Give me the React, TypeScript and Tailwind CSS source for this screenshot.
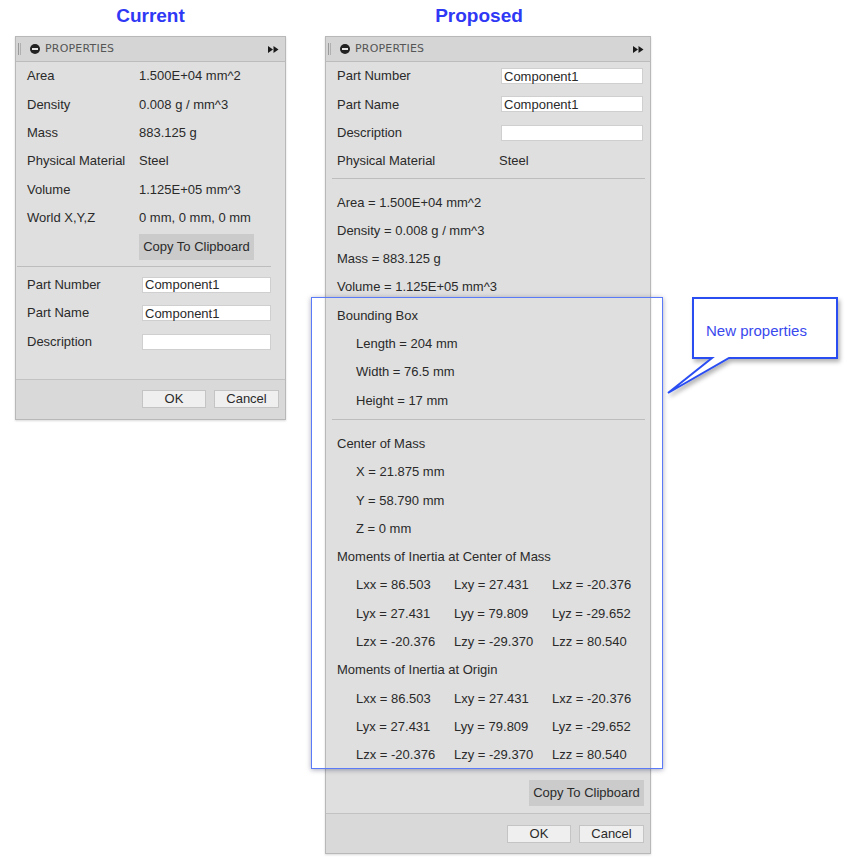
import React from "react";

const FONT = { fontFamily: '"Liberation Sans", Arial, sans-serif' };

const Header: React.FC = () => (
    <div className="flex h-[25px] items-center border-b border-[#bcbcbc] bg-[#d5d5d5] pl-[2px] pr-[6px]">
        <div className="flex h-[12px] gap-[1px]">
            <div className="w-[1px] bg-[#9a9a9a]" />
            <div className="w-[1px] bg-[#b0b0b0]" />
        </div>
        <div className="ml-[9px] flex h-[10px] w-[10px] items-center justify-center rounded-full bg-[#222]">
            <div className="h-[2px] w-[6px] bg-[#e6e6e6]" />
        </div>
        <div
            className="ml-[5px] flex-1 text-[11px] tracking-[0.2px] text-[#555]"
            style={{ fontFamily: '"DejaVu Sans", sans-serif' }}
        >
            PROPERTIES
        </div>
        <svg width="11" height="7" viewBox="0 0 11 7">
            <path d="M0 0 L5 3.5 L0 7 Z M5.5 0 L10.5 3.5 L5.5 7 Z" fill="#1a1a1a" />
        </svg>
    </div>
);

const Row: React.FC<{ label?: string; children?: React.ReactNode; labelW: number }> = ({
    label,
    children,
    labelW
}) => (
    <div className="flex h-[28.3px] items-center">
        <div style={{ width: labelW }} className="shrink-0">
            {label}
        </div>
        <div className="flex-1">{children}</div>
    </div>
);

const Field: React.FC<{ value?: string; w: number }> = ({ value, w }) => (
    <div
        style={{ width: w }}
        className="flex h-[16px] items-center border border-[#cfcfcf] bg-white pl-[2px] text-[13px] leading-none"
    >
        {value}
    </div>
);

const Footer: React.FC = () => (
    <div className="flex h-[40px] items-center justify-end gap-[8px] border-t border-[#c2c2c2] bg-[#d9d9d9] pr-[6px]">
        <div className="flex h-[18px] w-[64px] items-center justify-center border border-[#c4c4c4] bg-[#efefef] text-[13px]">
            OK
        </div>
        <div className="flex h-[18px] w-[65px] items-center justify-center border border-[#c4c4c4] bg-[#efefef] text-[13px]">
            Cancel
        </div>
    </div>
);

const ClipboardButton: React.FC = () => (
    <div className="flex h-[26px] w-[115px] items-center justify-center bg-[#cbcbcb] text-[13px]">
        Copy To Clipboard
    </div>
);

const CurrentPanel: React.FC = () => (
    <div className="border border-[#b8b8b8] bg-[#dfdfdf] text-[13px] text-[#2a2a2a] shadow-[0_1px_2px_rgba(0,0,0,0.15)]">
        <Header />
        <div className="pl-[11px]">
            <Row label="Area" labelW={112}>1.500E+04 mm^2</Row>
            <Row label="Density" labelW={112}>0.008 g / mm^3</Row>
            <Row label="Mass" labelW={112}>883.125 g</Row>
            <Row label="Physical Material" labelW={112}>Steel</Row>
            <Row label="Volume" labelW={112}>1.125E+05 mm^3</Row>
            <Row label="World X,Y,Z" labelW={112}>0 mm, 0 mm, 0 mm</Row>
            <div className="mt-[2px] pl-[112px]">
                <ClipboardButton />
            </div>
        </div>
        <div className="mt-[6px] ml-[1px] mr-[14px] border-t border-[#bdbdbd]" />
        <div className="mt-[4px] pl-[11px]">
            <Row label="Part Number" labelW={115}>
                <Field value="Component1" w={129} />
            </Row>
            <Row label="Part Name" labelW={115}>
                <Field value="Component1" w={129} />
            </Row>
            <Row label="Description" labelW={115}>
                <Field w={129} />
            </Row>
        </div>
        <div className="h-[23px]" />
        <Footer />
    </div>
);

const Line: React.FC<{ children: React.ReactNode; indent?: boolean }> = ({ children, indent }) => (
    <div className={`flex h-[28.3px] items-center ${indent ? "pl-[19px]" : ""}`}>{children}</div>
);

const Matrix: React.FC = () => {
    const cells = [
        ["Lxx = 86.503", "Lxy = 27.431", "Lxz = -20.376"],
        ["Lyx = 27.431", "Lyy = 79.809", "Lyz = -29.652"],
        ["Lzx = -20.376", "Lzy = -29.370", "Lzz = 80.540"]
    ];
    return (
        <div className="pl-[19px]">
            {cells.map((r, i) => (
                <div key={i} className="grid h-[28.3px] grid-cols-[98px_98px_98px] items-center">
                    {r.map((c) => (
                        <div key={c}>{c}</div>
                    ))}
                </div>
            ))}
        </div>
    );
};

const ProposedPanel: React.FC = () => (
    <div className="border border-[#b8b8b8] bg-[#dfdfdf] text-[13px] text-[#2a2a2a] shadow-[0_1px_2px_rgba(0,0,0,0.15)]">
        <Header />
        <div className="pl-[11px]">
            <Row label="Part Number" labelW={164}>
                <Field value="Component1" w={142} />
            </Row>
            <Row label="Part Name" labelW={164}>
                <Field value="Component1" w={142} />
            </Row>
            <Row label="Description" labelW={164}>
                <Field w={142} />
            </Row>
            <Row label="Physical Material" labelW={162}>Steel</Row>
        </div>
        <div className="mt-[3px] ml-[6px] mr-[5px] border-t border-[#bdbdbd]" />
        <div className="mt-[9px] pl-[11px]">
            <Line>Area = 1.500E+04 mm^2</Line>
            <Line>Density = 0.008 g / mm^3</Line>
            <Line>Mass = 883.125 g</Line>
            <Line>Volume = 1.125E+05 mm^3</Line>
            <Line>Bounding Box</Line>
            <Line indent>Length = 204 mm</Line>
            <Line indent>Width = 76.5 mm</Line>
            <Line indent>Height = 17 mm</Line>
        </div>
        <div className="mt-[4px] ml-[6px] mr-[5px] border-t border-[#bdbdbd]" />
        <div className="mt-[10px] pl-[11px]">
            <Line>Center of Mass</Line>
            <Line indent>X = 21.875 mm</Line>
            <Line indent>Y = 58.790 mm</Line>
            <Line indent>Z = 0 mm</Line>
            <Line>Moments of Inertia at Center of Mass</Line>
            <Matrix />
            <Line>Moments of Inertia at Origin</Line>
            <Matrix />
        </div>
        <div className="mt-[11px] flex justify-end pr-[6px]">
            <ClipboardButton />
        </div>
        <div className="h-[7px]" />
        <Footer />
    </div>
);

const Callout: React.FC = () => (
    <div className="pointer-events-none absolute left-[660px] top-[292px] h-[110px] w-[186px]">
        <svg width="186" height="110" viewBox="0 0 186 110" className="absolute left-0 top-0">
            <defs>
                <filter id="sh" x="-10%" y="-10%" width="130%" height="140%">
                    <feDropShadow dx="2" dy="3" stdDeviation="2" floodColor="#000" floodOpacity="0.3" />
                </filter>
            </defs>
            <path
                d="M33 6 H177 V66 H69 L8 101 L52 66 H33 Z"
                fill="#ffffff"
                stroke="#2a4ef2"
                strokeWidth="2"
                strokeLinejoin="miter"
                filter="url(#sh)"
            />
        </svg>
        <div className="absolute left-[46px] top-[28px] text-[15px] text-[#3a49ee]" style={FONT}>
            New properties
        </div>
    </div>
);

export default function App() {
    return (
        <div className="relative h-[865px] w-[852px] overflow-hidden bg-white" style={FONT}>
            <div className="flex items-start">
                <div className="ml-[15px] w-[271px]">
                    <div className="flex h-[36px] items-center justify-center pb-[4px] text-[19px] font-bold text-[#2f38f4]">
                        Current
                    </div>
                    <CurrentPanel />
                </div>
                <div className="ml-[39px] w-[326px]">
                    <div className="flex h-[36px] items-center justify-center pb-[4px] pr-[18px] text-[19px] font-bold text-[#2f38f4]">
                        Proposed
                    </div>
                    <ProposedPanel />
                </div>
            </div>
            <div className="pointer-events-none absolute left-[311px] top-[297px] h-[472px] w-[352px] border-[1.5px] border-[#5a7af7] shadow-[0_1px_5px_rgba(0,0,60,0.35)]" />
            <Callout />
        </div>
    );
}
